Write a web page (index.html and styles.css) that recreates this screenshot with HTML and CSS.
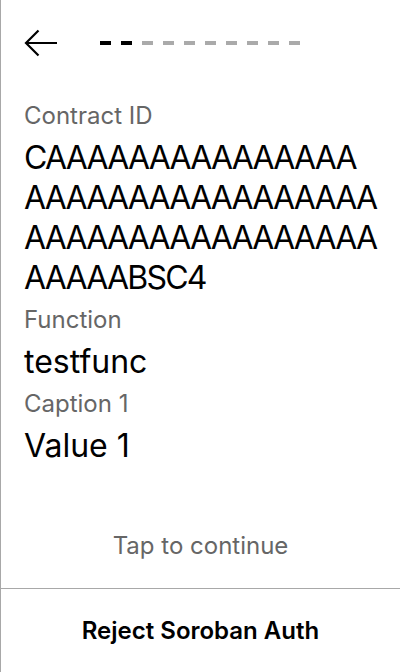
FILE: index.html
```html
<!DOCTYPE html>
<html>
<head>
<meta charset="utf-8">
<link rel="stylesheet" href="styles.css">
</head>
<body>
<div class="screen">
  <div class="header">
    <svg class="back" width="34" height="28" viewBox="0 0 34 28">
      <path d="M33 14 H2 M14.5 1.5 L2 14 L14.5 26.5" fill="none" stroke="#000" stroke-width="2.2"/>
    </svg>
    <div class="progress">
      <span class="dash on"></span><span class="dash on"></span><span class="dash"></span><span class="dash"></span><span class="dash"></span><span class="dash"></span><span class="dash"></span><span class="dash"></span><span class="dash"></span><span class="dash"></span>
    </div>
  </div>
  <div class="content">
    <div class="label">Contract ID</div>
    <div class="value id">CAAAAAAAAAAAAAAA<br>AAAAAAAAAAAAAAAAA<br>AAAAAAAAAAAAAAAAA<br>AAAAABSC4</div>
    <div class="label">Function</div>
    <div class="value">testfunc</div>
    <div class="label">Caption 1</div>
    <div class="value">Value 1</div>
  </div>
  <div class="tap">Tap to continue</div>
  <div class="footer">Reject Soroban Auth</div>
</div>
</body>
</html>
```
FILE: styles.css
```css
html, body {
  margin: 0;
  padding: 0;
  background: #fff;
}
body {
  font-family: Inter, "Noto Sans", sans-serif;
  color: #000;
}
.screen {
  width: 400px;
  height: 672px;
  box-sizing: border-box;
  border-left: 1px solid #a8a8a8;
  display: flex;
  flex-direction: column;
}
.header {
  height: 86px;
  display: flex;
  align-items: center;
  padding-left: 23px;
  flex-shrink: 0;
}
.back {
  display: block;
}
.progress {
  display: flex;
  gap: 10px;
  margin-left: 42px;
  margin-top: -1px;
}
.dash {
  width: 11px;
  height: 4px;
  background: #aaaaaa;
}
.dash.on {
  background: #000;
}
.content {
  flex: 1;
  padding: 14px 24px 0 23px;
}
.label {
  font-size: 24px;
  line-height: 32px;
  color: #666;
  margin-bottom: 6px;
}
.value {
  font-size: 32px;
  line-height: 40px;
  margin-bottom: 6px;
}
.value.id {
  white-space: nowrap;
  letter-spacing: -1.8px;
}
.tap {
  height: 86px;
  display: flex;
  align-items: center;
  justify-content: center;
  font-size: 24px;
  line-height: 32px;
  color: #666;
  flex-shrink: 0;
  padding-top: 2px;
  box-sizing: border-box;
}
.footer {
  height: 84px;
  border-top: 1px solid #a8a8a8;
  display: flex;
  align-items: center;
  justify-content: center;
  font-size: 24px;
  line-height: 32px;
  font-weight: 600;
  flex-shrink: 0;
  padding-top: 1px;
  box-sizing: border-box;
}
```
